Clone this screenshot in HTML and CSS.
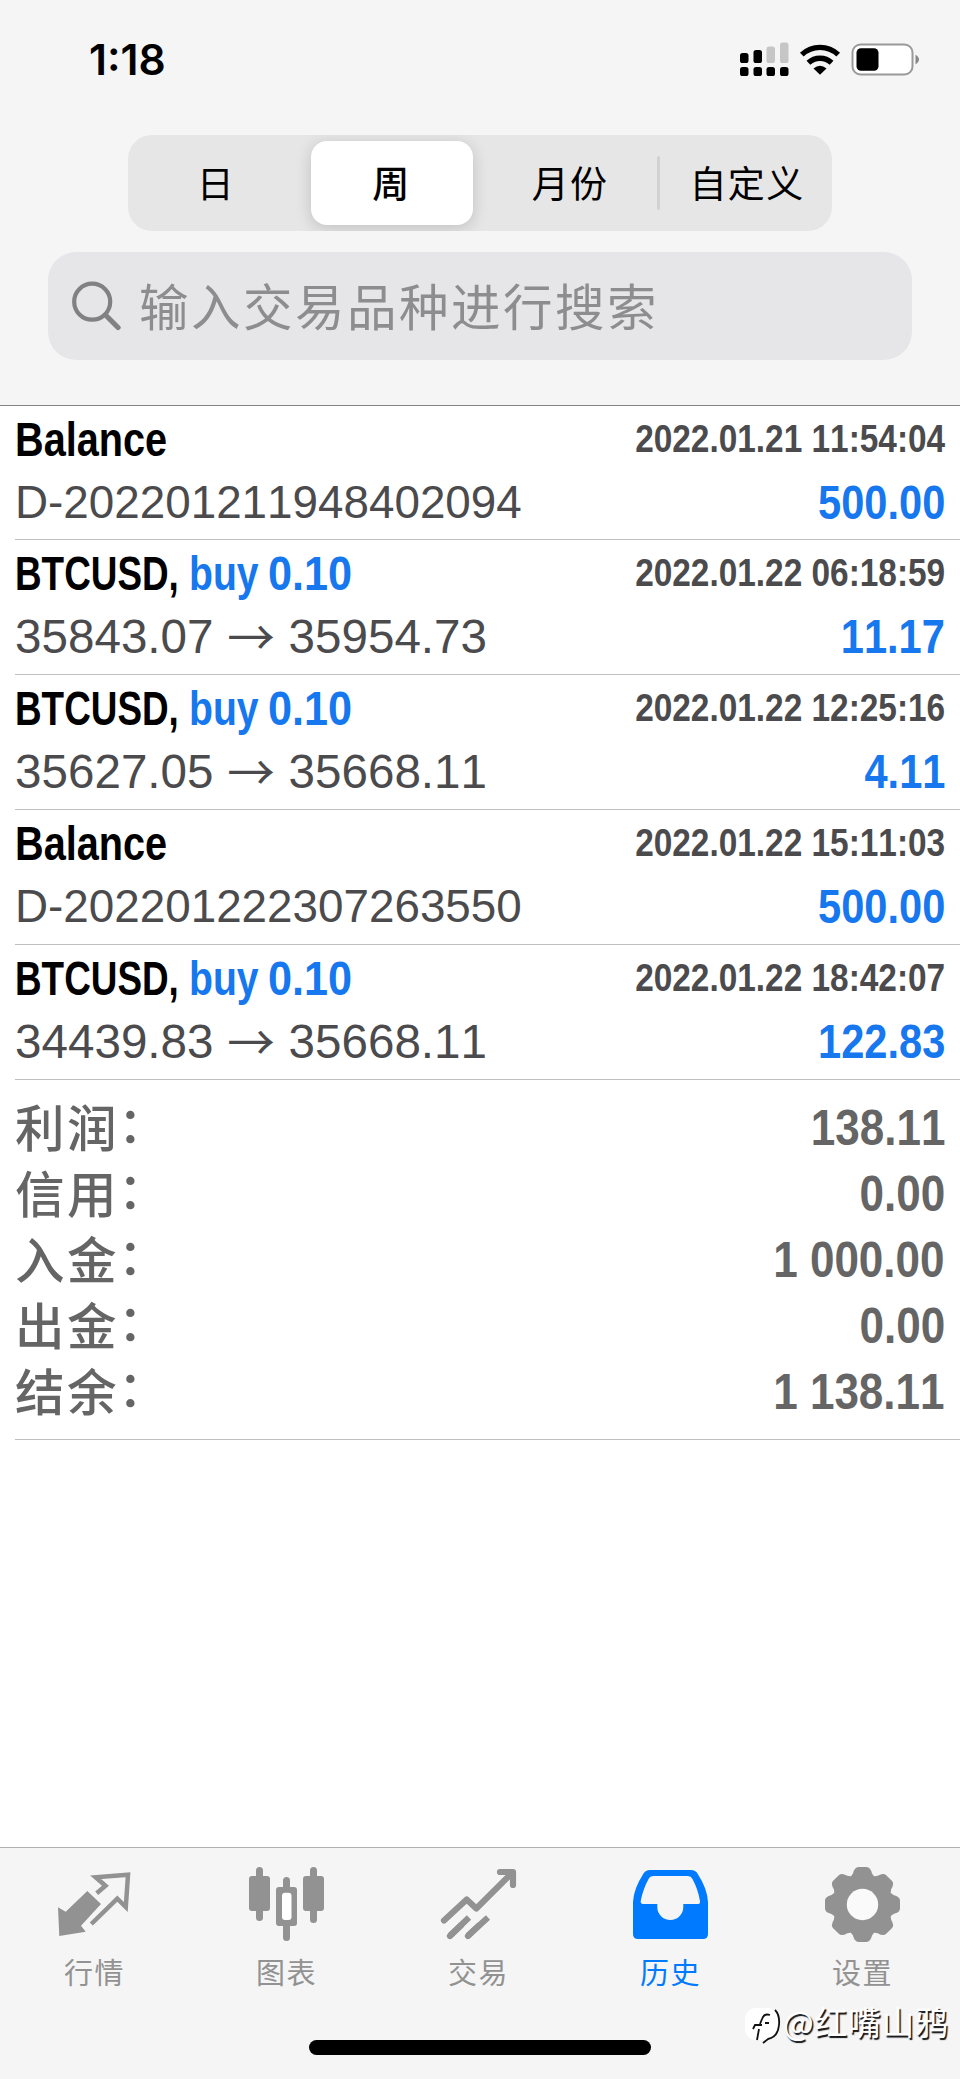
FILE: index.html
```html
<!DOCTYPE html>
<html lang="zh-CN">
<head>
<meta charset="utf-8">
<title>历史</title>
<link rel="stylesheet" href="styles.css">
</head>
<body>
<div class="screen">
  <header class="top">
    <div class="status">
      <span class="time">1:18</span>
      <svg class="status-icons" width="180" height="36" viewBox="0 0 180 36">
        <g fill="#000">
          <rect x="1" y="11" width="8.5" height="10" rx="2.6"/><rect x="14.500" y="8" width="8.5" height="13" rx="2.6"/>
          <rect x="1" y="25" width="8.5" height="9" rx="2.6"/><rect x="14.500" y="25" width="8.5" height="9" rx="2.6"/><rect x="27.500" y="25" width="8.5" height="9" rx="2.6"/><rect x="41" y="25" width="8.5" height="9" rx="2.6"/>
        </g>
        <g fill="#c6c6c6"><rect x="27.500" y="4.500" width="8.5" height="16.500" rx="2.6"/><rect x="41" y="0.500" width="8.5" height="20.500" rx="2.6"/></g>
        <g fill="none" stroke="#000" stroke-width="5.4">
          <path d="M62.800 12.6A26.5 26.5 0 0 1 99.2 12.6"/>
          <path d="M69.4 20.8A17 17 0 0 1 92.6 20.8"/>
        </g>
        <path d="M74.500 26.500Q81 21 87.500 26.500L81 32.8Z"/>
        <rect x="113.500" y="2.500" width="60" height="30" rx="8" fill="#fff" stroke="#999" stroke-width="2"/>
        <rect x="117.500" y="6.300" width="22" height="22.500" rx="4.500"/>
        <path d="M176.500 12.800Q180 14.800 180 17.500T176.500 22.300Z" fill="#888"/>
      </svg>
    </div>
    <nav class="segments">
      <span class="segment">日</span>
      <span class="segment segment-on">周</span>
      <span class="segment">月份</span>
      <i class="divider"></i>
      <span class="segment segment-wide">自定义</span>
    </nav>
    <div class="search">
      <svg width="50" height="50" viewBox="0 0 50 50" fill="none" stroke="#818184" stroke-linecap="round"><circle cx="20.200" cy="20.700" r="18" stroke-width="4.200"/><path d="M33.500 34L46 46.500" stroke-width="5.200"/></svg>
      <span class="placeholder">输入交易品种进行搜索</span>
    </div>
  </header>

  <main class="list">
    <section class="row">
      <div class="line"><span class="title"><b class="w-balance"><i>Balance</i></b></span><span class="date">2022.01.21 11:54:04</span></div>
      <div class="line second"><span class="comment">D-202201211948402094</span><span class="amount">500.00</span></div>
    </section>
    <section class="row">
      <div class="line"><span class="title"><b class="w-symbol"><i>BTCUSD,</i></b><b class="w-side"><i>buy</i></b><b class="w-lot"><i>0.10</i></b></span><span class="date">2022.01.22 06:18:59</span></div>
      <div class="line second"><span class="prices">35843.07<i class="arrow">→</i>35954.73</span><span class="amount">11.17</span></div>
    </section>
    <section class="row">
      <div class="line"><span class="title"><b class="w-symbol"><i>BTCUSD,</i></b><b class="w-side"><i>buy</i></b><b class="w-lot"><i>0.10</i></b></span><span class="date">2022.01.22 12:25:16</span></div>
      <div class="line second"><span class="prices">35627.05<i class="arrow">→</i>35668.11</span><span class="amount">4.11</span></div>
    </section>
    <section class="row">
      <div class="line"><span class="title"><b class="w-balance"><i>Balance</i></b></span><span class="date">2022.01.22 15:11:03</span></div>
      <div class="line second"><span class="comment">D-202201222307263550</span><span class="amount">500.00</span></div>
    </section>
    <section class="row">
      <div class="line"><span class="title"><b class="w-symbol"><i>BTCUSD,</i></b><b class="w-side"><i>buy</i></b><b class="w-lot"><i>0.10</i></b></span><span class="date">2022.01.22 18:42:07</span></div>
      <div class="line second"><span class="prices">34439.83<i class="arrow">→</i>35668.11</span><span class="amount">122.83</span></div>
    </section>
    <section class="summary">
      <div class="total"><span class="label">利润<i class="colon">：</i></span><span class="sum">138.11</span></div>
      <div class="total"><span class="label">信用<i class="colon">：</i></span><span class="sum">0.00</span></div>
      <div class="total"><span class="label">入金<i class="colon">：</i></span><span class="sum">1 000.00</span></div>
      <div class="total"><span class="label">出金<i class="colon">：</i></span><span class="sum">0.00</span></div>
      <div class="total"><span class="label">结余<i class="colon">：</i></span><span class="sum">1 138.11</span></div>
    </section>
  </main>

  <footer class="bottom">
    <nav class="tabs">
      <div class="tab">
        <svg class="icon" viewBox="0 0 75 75"><path fill="currentColor" d="M30.300 24L44 37L24 58.700L28.700 64.700L2.300 69L1 40.300L8.700 44.700Z"/><path fill="none" stroke="currentColor" stroke-width="4.500" d="M39.700 26.300L48.500 18.700L38.700 10.300L71 7.800L68.800 40L60.300 31.700L34.300 57"/></svg>
        <span>行情</span>
      </div>
      <div class="tab">
        <svg class="icon" viewBox="0 0 75 75"><g fill="currentColor"><rect x="0" y="9" width="21" height="35" rx="3"/><rect x="7" y="0" width="7" height="54" rx="3.500"/><rect x="54" y="9" width="21" height="35" rx="3"/><rect x="61" y="0" width="7" height="56" rx="3.500"/><rect x="27" y="20" width="21" height="39" rx="3"/><rect x="34" y="10" width="7" height="64" rx="3.500"/></g><rect x="33" y="25.700" width="9.500" height="27.300" rx="3" fill="#fff"/></svg>
        <span>图表</span>
      </div>
      <div class="tab">
        <svg class="icon" viewBox="0 0 75 75" fill="none" stroke="currentColor" stroke-width="6.200" stroke-linecap="round" stroke-linejoin="round"><path d="M3 53.500L25.700 32.500L35.300 41.500L70 7M59 5H72V18"/><path stroke-linecap="butt" d="M9 68.500L28 50.500M27 68.500L47 50.500"/><path d="M9 69L20 58.500M27 69L38 58.500"/></svg>
        <span>交易</span>
      </div>
      <div class="tab tab-on">
        <svg class="icon" viewBox="0 0 75 75" fill="currentColor" fill-rule="evenodd"><path d="M17 3H58Q62.500 3 64.500 6.500Q74.500 22 75 35V67Q75 72 70 72H5Q0 72 0 67V35Q.5 22 10.500 6.500Q12.500 3 17 3ZM20 9Q17 9 15.800 11.500Q10 22 7.700 34Q7.500 37 10 37H24.300V40A13 13 0 0 0 50.300 40V37H65Q67.500 37 67 34Q65 22 59.200 11.500Q58 9 55 9Z"/></svg>
        <span>历史</span>
      </div>
      <div class="tab">
        <svg class="icon" viewBox="-37.500 -37.500 75 75"><defs><path id="tooth" d="M-14 -25L-9.500 -31Q-8 -37.500 -4 -37.500H4Q8 -37.500 9.500 -31L14 -25Z"/></defs><g fill="currentColor"><circle r="28.500"/><use href="#tooth"/><use href="#tooth" transform="rotate(45)"/><use href="#tooth" transform="rotate(90)"/><use href="#tooth" transform="rotate(135)"/><use href="#tooth" transform="rotate(180)"/><use href="#tooth" transform="rotate(225)"/><use href="#tooth" transform="rotate(270)"/><use href="#tooth" transform="rotate(315)"/></g><circle r="15.700" fill="#fafafa"/></svg>
        <span>设置</span>
      </div>
    </nav>
    <div class="home"></div>
    <div class="credit">
      <svg width="38" height="40" viewBox="0 0 38 40"><rect x="0" y="3" width="33" height="32" rx="11" fill="#fff"/><g fill="none" stroke="#111" stroke-width="1.800"><path d="M12 35L14 24M15 19L17 14Q19 8 25 10M8 24L10 20H17M20 18H24"/><path d="M30 5Q35 10 34 20Q33 32 23 34L18 38"/></g></svg>
      <span>@红嘴山鸦</span>
    </div>
  </footer>
</div>
</body>
</html>
```
FILE: styles.css
```css
* { box-sizing: border-box; }
body { margin: 0; background: #fff; font-family: "Liberation Sans", "Noto Sans CJK SC", sans-serif; font-kerning: none; }
i { font-style: normal; }
svg { display: block; flex: none; }

.screen { width: 960px; height: 2079px; display: flex; flex-direction: column; overflow: hidden; background: #fff; }
.top { height: 406px; flex: none; background: #f5f5f5; border-bottom: 1px solid #858585; display: flex; flex-direction: column; align-items: center; }

.status { width: 960px; height: 135px; flex: none; padding: 42px 41px 0 89px; display: flex; justify-content: space-between; align-items: flex-start; }
.time { font: 600 42.500px/36px Inter, sans-serif; letter-spacing: 0; color: #000; }

.segments { width: 704px; height: 96px; flex: none; border-radius: 24px; background: #e6e6e6; padding: 6px 0 6px 1px; display: flex; align-items: center; overflow: hidden; }
.segment { width: 174px; height: 84px; flex: none; display: flex; align-items: center; justify-content: center; font: 400 37px/84px "Noto Sans CJK SC", sans-serif; letter-spacing: 1.3px; color: #000; padding-bottom: 2px; }
.segment-on { width: 162px; margin: 0 10px 0 8px; border-radius: 16px; background: #fff; box-shadow: 0 3px 16px rgba(0, 0, 0, .17); font-weight: 500; padding-right: 1px; }
.divider { width: 3px; height: 54px; flex: none; border-radius: 2px; background: #d2d2d2; }
.segment-wide { width: 174px; }

.search { width: 864px; height: 108px; flex: none; margin-top: 21px; border-radius: 28px; background: #e6e6e8; padding: 0 24px; display: flex; align-items: center; gap: 17px; }
.placeholder { font: 400 49.500px/100px "Noto Sans CJK SC", sans-serif; letter-spacing: 2.500px; color: #8d8d90; white-space: nowrap; padding-bottom: 2px; }

.row { height: 135px; margin-left: 15px; padding-right: 15px; border-bottom: 1px solid #c0c0c0; }
.row:first-child { height: 134px; }
.line { height: 67px; padding-top: 6px; display: flex; justify-content: space-between; align-items: flex-start; line-height: 56px; white-space: nowrap; }
.second { padding-top: 2px; }
.title { display: flex; font-size: 48px; font-weight: 700; color: #000; }
.title b { display: block; }
.title i { display: block; width: max-content; transform-origin: left; }
.w-balance { width: 160px; }
.w-balance i { transform: scaleX(.826); }
.w-symbol { width: 174px; }
.w-symbol i { transform: scaleX(.768); }
.w-side { width: 79px; color: #1677ee; }
.w-side i { transform: scaleX(.815); }
.w-lot { width: 90px; color: #1677ee; }
.w-lot i { transform: scaleX(.9); }
.date { font-size: 39px; font-weight: 700; line-height: 54px; color: #4b4b4d; transform: scaleX(.856); transform-origin: right; }
.amount { font-size: 47.500px; font-weight: 700; color: #1677ee; transform: scaleX(.876); transform-origin: right; }
.comment { font-size: 45.800px; color: #4b4b4d; }
.prices { display: flex; font-size: 47.600px; color: #4b4b4d; }
.arrow { width: 75px; text-align: center; font-family: "Noto Sans CJK SC", sans-serif; position: relative; top: -2px; }

.summary { height: 360px; margin-left: 15px; padding: 15px 15px 0 0; border-bottom: 1px solid #c0c0c0; color: #656565; }
.total { height: 66px; display: flex; justify-content: space-between; line-height: 66px; }
.label { display: flex; height: 62px; line-height: 62px; font-family: "Noto Sans CJK SC", sans-serif; font-size: 49.500px; font-weight: 500; letter-spacing: 2.500px; }
.colon { position: relative; top: -4px; left: -1px; }
.sum { font-size: 50.500px; font-weight: 700; transform: scaleX(.872); transform-origin: right; white-space: pre; }

.bottom { position: relative; margin-top: auto; height: 232px; flex: none; background: #f5f5f5; border-top: 1px solid #b0b0b0; }
.tabs { display: flex; width: 960px; padding-top: 19px; margin-left: -1.500px; }
.tab { width: 192px; flex: none; display: flex; flex-direction: column; align-items: center; color: #929292; font: 400 29px/44px "Noto Sans CJK SC", sans-serif; letter-spacing: 1.500px; }
.tab span { margin-top: 7px; }
.tab-on { color: #007aff; }
.icon { width: 75px; height: 75px; overflow: visible; }
.home { width: 342px; height: 15px; margin: 47px auto 0; border-radius: 8px; background: #000; }
.credit { position: absolute; left: 745px; top: 149px; display: flex; align-items: center; color: #fff; font: 400 32.500px/48px "Noto Sans CJK SC", sans-serif; letter-spacing: 1px; text-shadow: 1.500px 1.500px 1px #111; white-space: nowrap; }
.credit svg { margin-top: 7px; }
```
